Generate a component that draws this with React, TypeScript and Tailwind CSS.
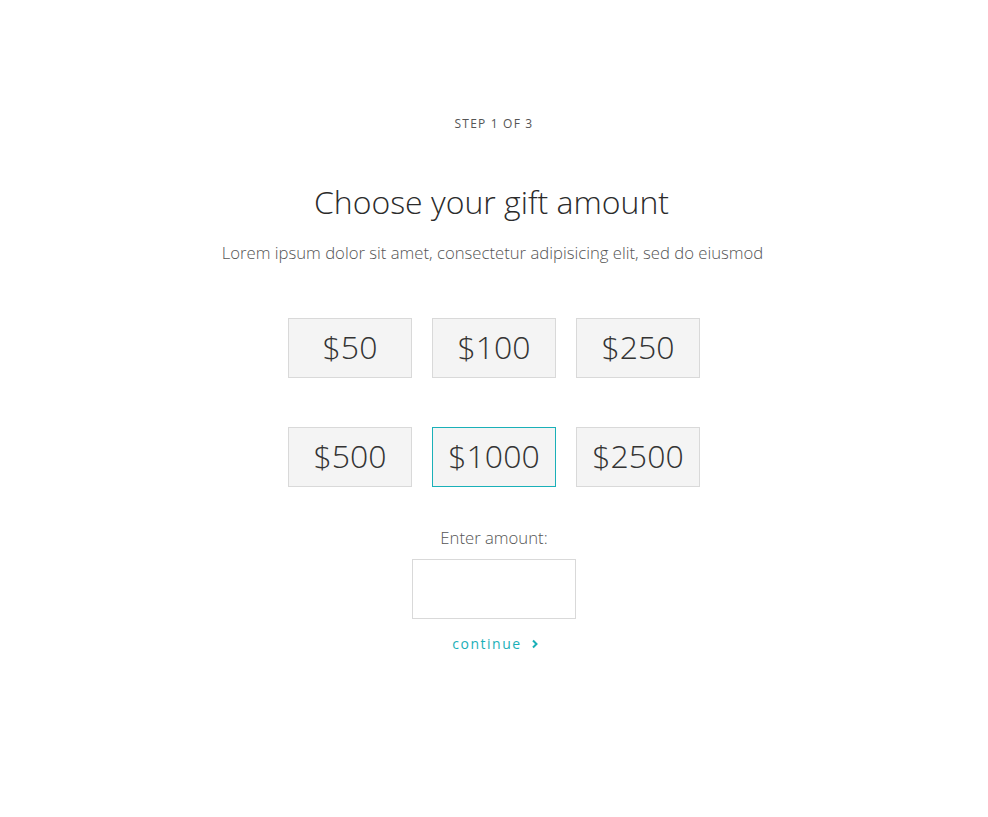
import { useState } from "react";

const amounts = [50, 100, 250, 500, 1000, 2500];

export default function App() {
  const [selected, setSelected] = useState(1000);

  return (
    <div
      className="min-h-[817px] bg-white flex flex-col items-center pt-[116px] text-[#333]"
      style={{ fontFamily: '"Open Sans", "Liberation Sans", sans-serif' }}
    >
      <p className="text-[12px] leading-4 tracking-[1.2px] font-normal text-[#555]">STEP 1 OF 3</p>

      <h1 className="mt-[50px] pr-[5px] text-[32px] leading-10 font-light text-[#2b2b2b]">
        Choose your gift amount
      </h1>
      <p className="mt-[19px] pr-[3px] text-[16.7px] leading-6 font-light text-[#555]">
        Lorem ipsum dolor sit amet, consectetur adipisicing elit, sed do eiusmod
      </p>

      {/* amount grid */}
      <div className="mt-[53px] grid grid-cols-[124px_124px_124px] gap-x-[20px] gap-y-[49px]">
        {amounts.map((a) => (
          <button
            key={a}
            onClick={() => setSelected(a)}
            className={`h-[60px] w-[124px] pb-[3px] bg-[#f4f4f4] border text-[32px] font-light text-[#333] leading-none ${
              a === selected ? "border-[#1ab0b8]" : "border-[#d9d9d9]"
            }`}
          >
            ${a}
          </button>
        ))}
      </div>

      <label className="mt-[39px] text-[16.7px] leading-6 font-light text-[#555]">
        Enter amount:
      </label>
      <input className="mt-[9px] h-[60px] w-[164px] border border-[#d9d9d9] outline-none" />

      <a
        href="#"
        className="mt-[15px] pl-[3px] flex items-center gap-[9px] text-[14px] leading-5 tracking-[1.5px] font-medium text-[#1ab0b8]"
      >
        continue
        <svg width="8" height="10" viewBox="0 0 8 10" fill="none">
          <path d="M2 1.5 L5.5 5 L2 8.5" stroke="currentColor" strokeWidth="2" />
        </svg>
      </a>
    </div>
  );
}
